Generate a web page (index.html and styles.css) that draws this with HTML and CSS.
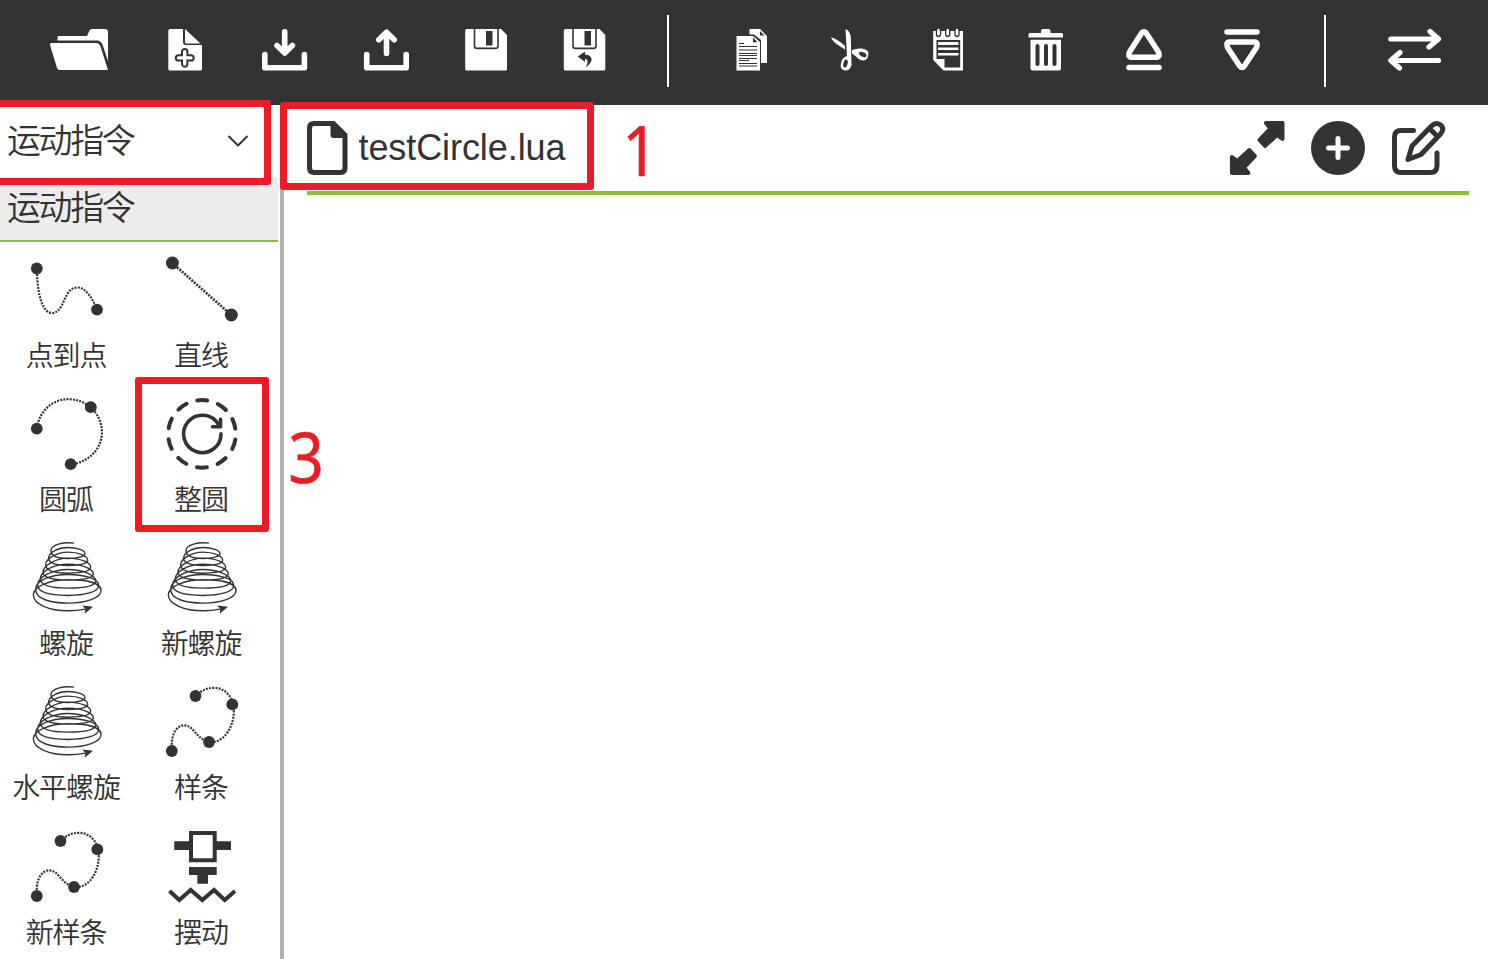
FILE: index.html
```html
<!DOCTYPE html>
<html lang="zh-CN">
<head>
<meta charset="utf-8">
<title>testCircle.lua</title>
<link rel="stylesheet" href="styles.css">
</head>
<body>
<svg class="defs" width="0" height="0" aria-hidden="true">
  <symbol id="spiral" viewBox="0 0 135 90">
    <g transform="translate(0 .1) scale(.33333)">
      <path class="coil" d="M222 39C190 35 153 44 153 62S176 85 204 85S255 79 255 70S232 52 204 52S146 66 146 84S172 106 204 106S263 102 263 90S237 66 204 66S137 86 137 104S167 129 204 129S272 124 272 111S242 84 204 84S129 108 129 126S163 150 204 150S280 146 280 131S246 102 204 102S121 124 121 146S158 174 204 174S287 168 287 152S250 118 204 118S113 140 113 165S154 196 204 196S296 186 296 166S254 133 204 133S107 150 107 178S150 219 204 219S303 204 303 181S258 149 204 149S100 168 100 195S148 242 204 242Q232 242 256 237"/>
      <path class="fill" d="M279 230L247 226L256 237L254 251Z"/>
    </g>
  </symbol>
  <symbol id="spline" viewBox="0 0 135 90">
    <path class="dots" d="M36.7 74C36.2 58 43 51.3 49 51.3C59 51.3 61 65 74 68C90 70 101 50 98.5 31C96 21 89 13.8 79 13.8C71 13.8 66 17 60 22"/>
    <g class="fill"><circle cx="60.5" cy="22" r="5.9"/><circle cx="97.3" cy="30.4" r="5.9"/><circle cx="74" cy="68" r="5.9"/><circle cx="36.8" cy="77" r="5.9"/></g>
  </symbol>
</svg>

<header class="toolbar">
  <div class="tools tools-file">
    <svg viewBox="35 25 100 50"><path d="M57.500 40.500V37.500Q57.500 36 59 36H87L89.500 30.500Q90.200 29 92 29H105Q108 29 108 32V61L103 46Q101.500 40.500 97 40.500Z"/><path d="M51.500 43H96Q99.300 43 100.300 46L108 70H60Q57.800 70 57 68L50 45Q49.500 43 51.500 43Z"/></svg>
    <svg viewBox="135 25 100 50"><path d="M170 29H183V42Q183 45 186 45H202V69Q202 70.500 200.500 70.500H170Q168.300 70.500 168.300 69V31Q168.300 29 170 29Z"/><path d="M185 29L200.500 43.500H187Q185 43.500 185 42Z"/><path class="cut-line plus" d="M182 51.700A2.700 2.700 0 0 1 187.400 51.700V55.200H191A2.700 2.700 0 0 1 191 60.600H187.400V64A2.700 2.700 0 0 1 182 64V60.600H178.500A2.700 2.700 0 0 1 178.500 55.200H182Z"/></svg>
    <svg viewBox="235 25 100 50"><path class="line" d="M264.800 54.500V67.700H304.400V54.500" stroke-width="5.600"/><path class="line" d="M284.700 31.700V52M277 45.500L284.700 53L292.400 45.500" stroke-width="5.600"/></svg>
    <svg viewBox="335 25 100 50"><path class="line" d="M366.700 54.500V67.700H406.200V54.500" stroke-width="5.600"/><path class="line" d="M386.500 53.500V33M378.800 39.800L386.500 32.300L394.200 39.800" stroke-width="5.600"/></svg>
    <svg viewBox="435 25 100 50"><path d="M467 29H501L507 35V69Q507 70.500 505.500 70.500H467Q465.200 70.500 465.200 69V31Q465.200 29 467 29Z"/><path class="cut-line" d="M474.500 28V46Q474.500 48.400 477 48.400H495.500Q498 48.400 498 46V28"/><path class="dark" d="M486 31H492.500V45.500H486Z"/></svg>
    <svg viewBox="535 25 100 50"><path d="M565.500 29H599.500L605.300 35V69Q605.300 70.500 603.800 70.500H565.500Q563.800 70.500 563.800 69V31Q563.800 29 565.500 29Z"/><path class="cut-line" d="M573 28V46Q573 48.400 575.500 48.400H593.500Q596 48.400 596 46V28"/><path class="dark" d="M584.500 31H591V45.500H584.500ZM577.800 56.500L585 51.500V54.500C592 55 595 61 586 67C588 62 588.500 59.500 585 59V62Z"/></svg>
  </div>
  <span class="divider"></span>
  <div class="tools tools-edit">
    <svg viewBox="703 25 98 50"><path d="M749.500 29H760L767 36V63H761V40L754 34.500H749.500Z"/><path class="dark" d="M760 31L764.500 35.500H760Z"/><path d="M736.500 36H753L760 42V70.500H736.500Z"/><path class="dark" d="M753 37.500L757.500 42.300H753Z"/><path class="rule" d="M739 43.500H744M739 46.500H757M739 50H757M739 53.500H757M739 55.500H757M739 58.500H757M739 60.500H749M739 63.500H757M739 66H757"/></svg>
    <svg viewBox="801 25 98 50"><path d="M831 37.500C835 37.500 842 43 845 46V49.500C839 45.500 833 42.500 831 37.500ZM845.500 29Q850.500 31 850.800 38L851.500 65Q850 70.500 845.500 70.500Q840 70 840.800 64Q842 57 847 56ZM852 50L859 48.500Q866 48 868.300 52Q869 59 864 60.500Q860 61 856 56.500L852 53.500Z"/><ellipse class="dark" cx="845.500" cy="63.500" rx="2.100" ry="4" transform="rotate(15 845.500 63.500)"/><ellipse class="dark" cx="862.800" cy="54.500" rx="4" ry="2.200" transform="rotate(25 862.800 54.500)"/></svg>
    <svg viewBox="899 25 98 50"><path fill-rule="evenodd" d="M933.200 31H963V70.500H943.500L933.200 60ZM936.500 40V59H944.500V67.500H960.200V40Z"/><path class="rule hooks" d="M936.500 29V34Q936.500 36.500 938.500 36.500T940.500 34V29M945.700 29V34Q945.700 36.500 947.700 36.500T949.700 34V29M955 29V34Q955 36.500 957 36.500T959 34V29"/><path class="line" d="M938.500 30V34M947.700 30V34M957 30V34" stroke-width="2.400"/><path d="M938 42H958.500V45H938ZM938 47.500H958.500V50H938ZM938 53H958.500V55.500H938Z"/></svg>
    <svg viewBox="997 25 98 50"><path d="M1030 33H1041V31Q1041 29 1043 29H1048.500Q1050.500 29 1050.500 31V33H1061.500Q1063 33 1063 34.500V37.500H1028.500V34.500Q1028.500 33 1030 33ZM1030.500 39.800H1061V68.500Q1061 70.500 1059 70.500H1032.500Q1030.500 70.500 1030.500 68.500Z"/><path class="slots" d="M1037.500 46V64M1046 46V64M1054.500 46V64"/></svg>
    <svg viewBox="1095 25 98 50"><path class="line" d="M1141.500 33.200L1129.500 52Q1127.500 57 1131.500 57.300H1156.500Q1160.500 57 1158.500 52L1146.300 33.200Q1143.900 30.500 1141.500 33.200ZM1129 67.500H1159" stroke-width="5.500"/></svg>
    <svg viewBox="1193 25 98 50"><path class="line" d="M1227 32H1257M1239.700 66L1227.500 47.500Q1225.500 42.300 1229.500 42H1254.500Q1258.500 42.300 1256.500 47.500L1244.300 66Q1242 69 1239.700 66Z" stroke-width="5.500"/></svg>
  </div>
  <span class="divider second"></span>
  <div class="tools tools-switch">
    <svg viewBox="1364 25 100 50"><path class="line" d="M1390.800 39H1438M1430 31.500L1438.500 39L1429 47M1438.500 60.500H1391M1400 52.500L1390.800 60.500L1399.500 68" stroke-width="5.200"/></svg>
  </div>
</header>

<main class="workspace">
  <aside class="sidebar">
    <div class="select"><span>运动指令</span><svg width="22" height="14" viewBox="0 0 22 14"><path class="stroke" d="M2 2.500L11 11.500L20 2.500" stroke-width="1.900"/></svg></div>
    <div class="group-title">运动指令</div>
    <div class="commands">
      <div class="command"><svg viewBox="0 0 135 90"><path class="dots" d="M37 32C38 55 43 71 52 71C65 71 63 45.500 77.500 45.500C86 45.500 92 56 97 67"/><g class="fill"><circle cx="36.800" cy="26.500" r="5.900"/><circle cx="97" cy="67.600" r="5.900"/></g></svg><span>点到点</span></div>
      <div class="command"><svg viewBox="0 0 135 90"><path class="dots thick" d="M37.300 21L96.300 73"/><g class="fill"><circle cx="37.400" cy="21" r="6.500"/><circle cx="96.300" cy="73" r="6.500"/></g></svg><span>直线</span></div>
      <div class="command"><svg viewBox="0 0 135 90"><path class="dots" d="M36.700 42C40 24 53 13 68.500 13.200C77 13.300 84 16 90.500 21C98 28 102 37 102 47C101.500 63 89 76 71 78.500"/><g class="fill"><circle cx="36.800" cy="42.600" r="5.900"/><circle cx="90.800" cy="21.200" r="5.900"/><circle cx="70.700" cy="78.200" r="5.900"/></g></svg><span>圆弧</span></div>
      <div class="command"><svg viewBox="0 0 135 90"><circle class="stroke ring" cx="67" cy="47.900" r="33.800"/><path class="stroke" d="M86 47.900A18.700 18.700 0 1 1 83.500 38.600M85.500 33.200V40.800H77.500" stroke-width="3.600"/></svg><span>整圆</span><i class="mark mark-command"></i></div>
      <div class="command"><svg viewBox="0 0 135 90"><use href="#spiral"/></svg><span>螺旋</span></div>
      <div class="command"><svg viewBox="0 0 135 90"><use href="#spiral"/></svg><span>新螺旋</span></div>
      <div class="command"><svg viewBox="0 0 135 90"><use href="#spiral"/></svg><span>水平螺旋</span></div>
      <div class="command"><svg viewBox="0 0 135 90"><use href="#spline"/></svg><span>样条</span></div>
      <div class="command"><svg viewBox="0 0 135 90"><use href="#spline"/></svg><span>新样条</span></div>
      <div class="command"><svg viewBox="0 0 135 90"><path class="fill" fill-rule="evenodd" d="M54 12H81.700V43.300H54ZM58 16V39.300H77.700V16ZM39.300 22.300H54V31H39.300ZM81.700 22.300H96V31H81.700ZM54 48H81.700V56H73V64.700H62.300V56H54Z"/><path class="zigzag" d="M34.500 72L44.300 81L55.700 71L67.300 81L79 71L89.700 81L100 72"/></svg><span>摆动</span></div>
    </div>
  </aside>

  <section class="editor">
    <div class="tabbar">
      <div class="tab">
        <svg width="41" height="54" viewBox="0 0 41 54"><path class="stroke" d="M7 2.500H26.500L38 14V47Q38 51.500 33.500 51.500H7Q2.500 51.500 2.500 47V7Q2.500 2.500 7 2.500Z" stroke-width="5"/><path class="fill" d="M23.500 2L39.500 15.500V17H26.500Q23.500 17 23.500 14Z"/></svg>
        <span>testCircle.lua</span>
      </div>
      <div class="actions">
        <svg width="56" height="56" viewBox="0 0 56 56"><g id="arrow"><path class="fill round" d="M37 3H53.500V19L48 15L36 26L30.500 20L41.500 8.500Z"/></g><use href="#arrow" transform="rotate(180 28.200 28)"/></svg>
        <svg width="54" height="56" viewBox="0 0 54 56"><circle class="fill" cx="27" cy="28" r="27"/><path class="line" d="M17.500 28H36.500M27 18.500V37.500" stroke-width="5"/></svg>
        <svg width="56" height="56" viewBox="0 0 56 56"><path class="stroke" d="M22.500 10.500H10Q3.500 10.500 3.500 17V45.500Q3.500 52.500 10 52.500H39.500Q46 52.500 46 45.500V33M17 39.500L21 26L40.500 6C44.500 2 49 3.500 51 6.500Q53 10 49.500 14L30 34.500ZM38.500 8.500L46.500 16.500" stroke-width="5"/></svg>
      </div>
    </div>
    <div class="canvas"></div>
  </section>
</main>

<i class="mark mark-select"></i>
<i class="mark mark-tab"></i>
<span class="step step-one">1</span>
<span class="step step-three">3</span>
</body>
</html>
```
FILE: styles.css
```css
* { box-sizing: border-box; }
body {
  margin: 0;
  width: 1488px;
  height: 959px;
  overflow: hidden;
  position: relative;
  background: #fff;
  color: #333;
  font-family: "Liberation Sans", "Noto Sans CJK SC", sans-serif;
}
svg { display: block; flex: none; }
.defs { position: absolute; }

.toolbar { height: 105px; background: #333; display: flex; align-items: center; padding-left: 35px; }
.tools { display: flex; height: 50px; margin-bottom: 5px; }
.tools svg { width: 100px; height: 50px; fill: #fff; }
.tools-edit svg { width: 98px; }
.divider { width: 2px; height: 72px; background: #fff; margin: 0 34px 3px 32px; }
.divider.second { margin: 0 38px 3px 33px; }

.line { fill: none; stroke: #fff; stroke-linecap: round; stroke-linejoin: round; }
.tools .line, .tools .cut-line, .tools .rule { fill: none; }
.cut-line { stroke: #333; stroke-width: 1.6; }
.plus { stroke-width: 2; }
.tools .dark { fill: #333; }
.rule { stroke: #333; stroke-width: 1; }
.hooks { stroke-width: 1.4; }
.slots { stroke: #333; stroke-width: 4; stroke-linecap: round; }

.workspace { display: flex; height: 854px; }
.sidebar { width: 284px; border-right: 4px solid #b3b3b3; padding-right: 2px; }
.select, .group-title { font-family: "Noto Sans CJK SC DemiLight", "Noto Sans CJK SC", sans-serif; font-size: 34px; font-weight: 350; letter-spacing: -2.4px; padding-left: 7px; }
.select { height: 72px; display: flex; justify-content: space-between; align-items: center; padding-right: 29px; }
.select span { line-height: 68px; margin-bottom: 4px; }
.group-title { height: 65px; line-height: 58px; background: #ececec; border-bottom: 2px solid #8dbd3a; }

.commands { display: grid; grid-template-columns: 135px 135px; grid-template-rows: 144px 144px 144px 145px 140px; }
.command { position: relative; display: flex; flex-direction: column; align-items: center; }
.command > svg { width: 135px; height: 90px; }
.command span { font-family: "Noto Sans CJK SC DemiLight", "Noto Sans CJK SC", sans-serif; font-size: 28px; font-weight: 350; line-height: 44px; letter-spacing: -1.1px; padding-right: 3px; white-space: nowrap; }

.stroke { fill: none; stroke: #333; stroke-linecap: round; stroke-linejoin: round; }
.fill { fill: #333; stroke: none; }
.round { stroke: #333; stroke-width: 4; stroke-linejoin: round; }
.dots { fill: none; stroke: #333; stroke-width: 2.2; stroke-dasharray: 2 1.2; }
.thick { stroke-width: 2.6; }
.ring { stroke-width: 4; stroke-dasharray: 10 11.237; stroke-dashoffset: -5.6; }
.coil { fill: none; stroke: #333; stroke-width: 4.2; }
.zigzag { fill: none; stroke: #333; stroke-width: 4; }

.editor { flex: 1; display: flex; flex-direction: column; padding: 0 19px 0 23px; }
.tabbar { height: 90px; border-bottom: 4px solid #8dbd3a; display: flex; align-items: center; justify-content: space-between; padding-right: 22px; }
.tab { display: flex; align-items: center; gap: 10.5px; font-size: 36px; letter-spacing: -.08px; }
.actions { display: flex; gap: 26px; }
.canvas { flex: 1; }

.mark { position: absolute; border: 7px solid #ed1c24; border-radius: 3px; }
.mark-select { left: -10px; top: 100px; width: 281px; height: 85px; }
.mark-tab { left: 280px; top: 102px; width: 314px; height: 88px; }
.mark-command { left: 0; top: -9px; width: 134px; height: 155px; }
.step { position: absolute; color: #ed1c24; font: 400 70px/80px "Noto Sans", sans-serif; -webkit-text-stroke: .6px #ed1c24; transform: scaleX(.89); }
.step-one { left: 620px; top: 109px; }
.step-three { left: 286px; top: 416px; }
```
